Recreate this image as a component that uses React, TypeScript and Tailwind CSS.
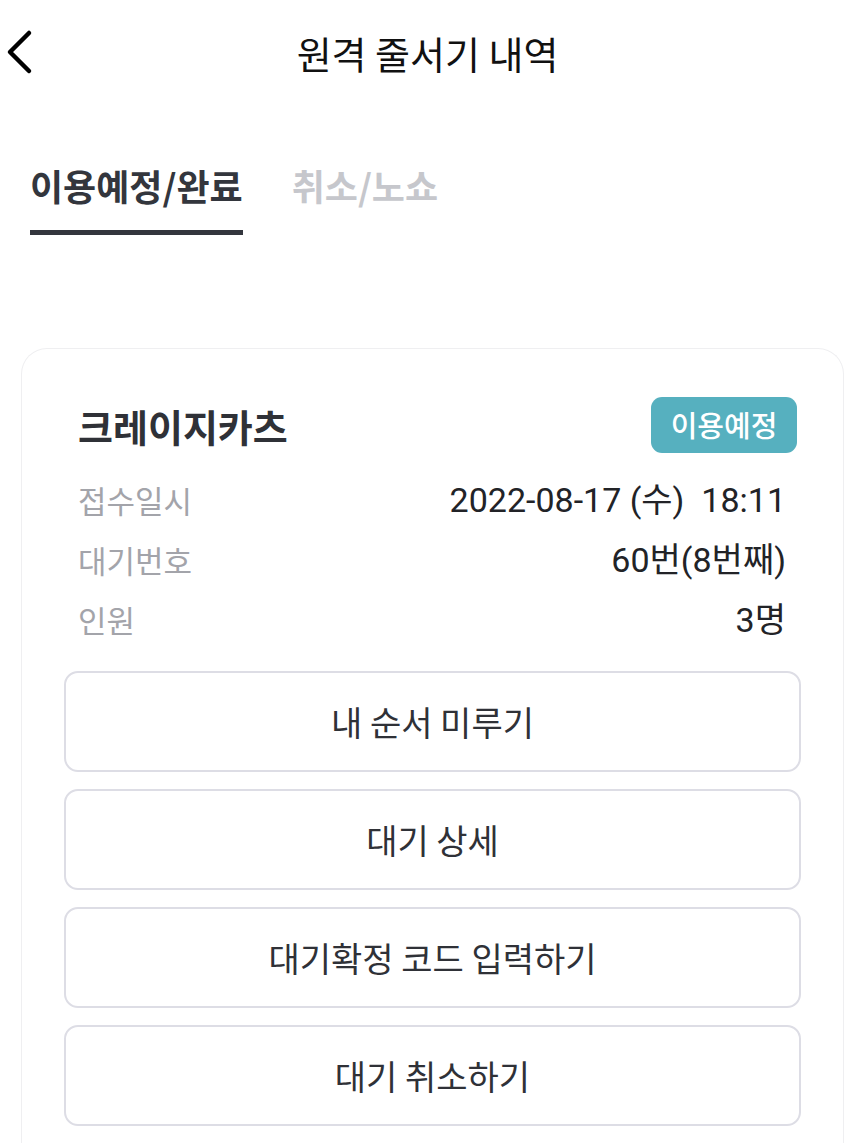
import React from "react";

const font = { fontFamily: '"Noto Sans CJK KR", "Noto Sans", sans-serif' };
const numFont = { fontFamily: 'Roboto, "Noto Sans CJK KR", sans-serif' };

function Row({ label, value }: { label: string; value: string }) {
  return (
    <div className="flex h-[60px] items-center justify-between pl-[14px] pr-[15px]">
      <span className="text-[31px] text-[#a3a4aa]">{label}</span>
      <span className="whitespace-pre text-[34px] text-[#222327]" style={numFont}>
        {value}
      </span>
    </div>
  );
}

function Btn({ children }: { children: React.ReactNode }) {
  return (
    <button className="flex h-[101px] w-full items-center justify-center rounded-[14px] border-2 border-[#dddde5] bg-white text-[34px] text-[#2f3137]">
      {children}
    </button>
  );
}

export default function App() {
  return (
    <div className="min-h-[1143px] w-[855px] overflow-hidden bg-white" style={font}>
      <header className="relative flex h-[104px] items-center justify-center">
        <svg
          className="absolute left-[4px] top-[29px]"
          width="30"
          height="46"
          viewBox="0 0 30 46"
          fill="none"
        >
          <path d="M25 4 L6 23 L25 42" stroke="#000" strokeWidth="4.5" strokeLinecap="round" strokeLinejoin="round" />
        </svg>
        <h1 className="text-[38px] font-normal text-[#111]">원격 줄서기 내역</h1>
      </header>

      <nav className="flex gap-[49px] px-[30px] pt-[46px]">
        <div className="flex flex-col">
          <span className="text-[36px] font-bold leading-[70px] text-[#33363d]">이용예정/완료</span>
          <div className="mt-[10px] h-[5px] bg-[#33363d]" />
        </div>
        <div className="flex flex-col">
          <span className="text-[36px] font-bold leading-[70px] text-[#c6c7cc]">취소/노쇼</span>
        </div>
      </nav>

      <section className="ml-[21px] mr-[11px] mt-[113px] rounded-t-[26px] border border-b-0 border-[#efeff1] px-[42px] pb-[40px] pt-[48px]">
        <div className="flex h-[56px] items-center justify-between pl-[14px] pr-[4px]">
          <span className="text-[38px] font-bold text-[#2f3137]">크레이지카츠</span>
          <span className="flex h-[56px] w-[146px] items-center justify-center rounded-[11px] bg-[#56b0bf] text-[29px] font-medium text-white">
            이용예정
          </span>
        </div>
        <div className="mt-[17px] flex flex-col">
          <Row label="접수일시" value="2022-08-17 (수)  18:11" />
          <Row label="대기번호" value="60번(8번째)" />
          <Row label="인원" value="3명" />
        </div>
        <div className="mt-[21px] flex flex-col gap-[17px]">
          <Btn>내 순서 미루기</Btn>
          <Btn>대기 상세</Btn>
          <Btn>대기확정 코드 입력하기</Btn>
          <Btn>대기 취소하기</Btn>
        </div>
      </section>
    </div>
  );
}
